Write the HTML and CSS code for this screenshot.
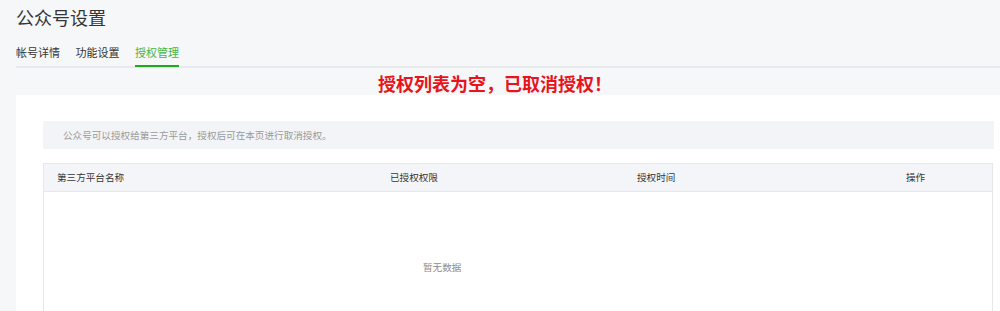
FILE: index.html
```html
<!DOCTYPE html>
<html lang="zh-CN">
<head>
  <meta charset="UTF-8">
  <title>公众号设置</title>
  <link rel="stylesheet" href="styles.css">
</head>
<body>
  <h1 class="page-title">公众号设置</h1>

  <!-- Tabs -->
  <ul class="tabs">
    <li class="tab">帐号详情</li>
    <li class="tab">功能设置</li>
    <li class="tab active">授权管理</li>
  </ul>

  <div class="alert-msg">授权列表为空，已取消授权！</div>

  <!-- Authorization card -->
  <div class="card">
    <div class="notice">公众号可以授权给第三方平台，授权后可在本页进行取消授权。</div>

    <div class="auth-table">
      <div class="thead">
        <div class="th">第三方平台名称</div>
        <div class="th">已授权权限</div>
        <div class="th">授权时间</div>
        <div class="th">操作</div>
      </div>
      <div class="empty">暂无数据</div>
    </div>
  </div>
</body>
</html>
```

FILE: styles.css
```css
body { margin: 0; padding: 0 0 0 16px; background-color: #f6f7f9; font-family: "Noto Sans CJK SC", "Noto Sans", sans-serif; color: #353535; overflow: hidden; }
.page-title { margin: 0; padding-top: 5px; font-size: 18px; line-height: 24px; font-weight: normal; color: #353535; }
/* Tabs */
.tabs { list-style: none; margin: 13px 0 0 0; padding: 0; display: flex; gap: 15.5px; border-bottom: 2px solid #e8e9ec; }
.tab { font-size: 11px; line-height: 20px; padding-bottom: 3px; color: #353535; }
.tab.active { color: #44b549; border-bottom: 2px solid #1aad19; margin-bottom: -1px; }
.alert-msg { padding: 5px 0 2px 362px; font-size: 18px; line-height: 20px; font-weight: bold; color: #e8141b; }
/* Card */
.card { background: #fff; padding: 26px 6px 0 27px; height: 190px; overflow: hidden; }
.notice { height: 28px; line-height: 28px; padding-left: 20px; background: #f2f4f7; font-size: 9.6px; color: #9a9a9a; margin-bottom: 14px; }
.auth-table { border: 1px solid #e7e7eb; margin-right: 1px; }
.thead { display: grid; grid-template-columns: 333px 247px 269px 1fr; height: 27px; background: #f4f5f9; border-bottom: 1px solid #e7e7eb; }
.th { padding-left: 13px; font-size: 9.6px; line-height: 27px; color: #353535; }
.empty { padding: 65px 0 0 379px; height: 100px; font-size: 9.6px; line-height: 20px; color: #8d8d8d; }
```
